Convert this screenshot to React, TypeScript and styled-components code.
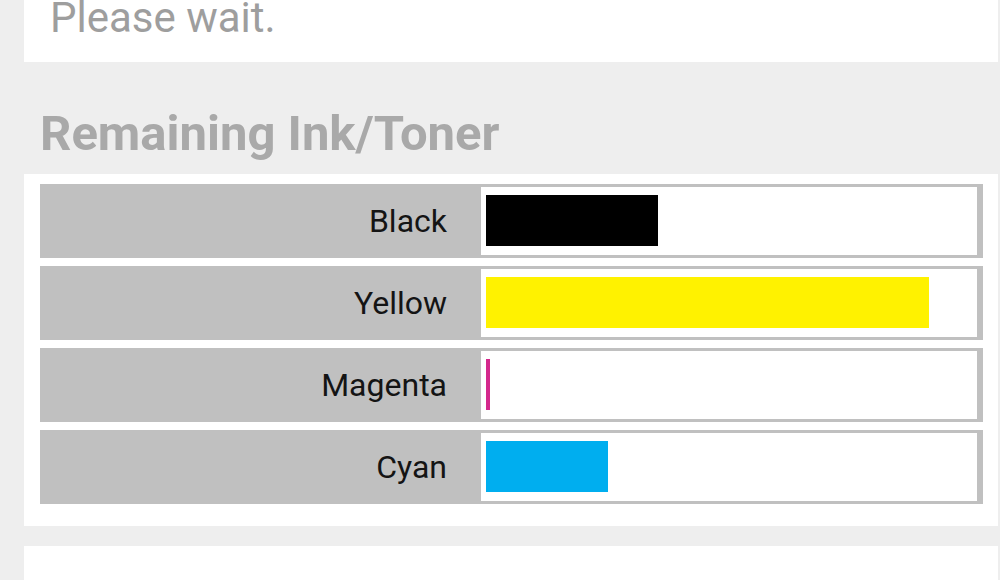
import React from 'react';
import styled, { createGlobalStyle } from 'styled-components';

const GlobalStyle = createGlobalStyle`
    html, body {
        margin: 0;
        padding: 0;
        background: #eeeeee;
        font-family: Roboto, 'Liberation Sans', sans-serif;
    }
`;

const Page = styled.div`
    width: 1000px;
    height: 580px;
    overflow: hidden;
    padding-left: 24px;
    box-sizing: border-box;
    background: #eeeeee;
`;

// верхняя карточка прокручена наполовину за край окна
const StatusCard = styled.div`
    height: 62px;
    overflow: hidden;
    background: #ffffff;
    padding-left: 26px;
    margin-right: 2px;
`;

const StatusText = styled.div`
    margin-top: -3px;
    font-size: 42px;
    line-height: 42px;
    color: #9e9e9e;
`;

const SectionTitle = styled.h2`
    margin: 47px 0 16px 16px;
    font-size: 49px;
    line-height: 49px;
    font-weight: 700;
    color: #a9a9a9;
`;

const InkCard = styled.div`
    background: #ffffff;
    padding: 10px 15px 22px 16px;
    margin-right: 2px;
    display: flex;
    flex-direction: column;
    gap: 8px;
`;

const InkRow = styled.div`
    display: grid;
    grid-template-columns: 438px 1fr;
    height: 74px;
    background: #c0c0c0;
`;

const InkLabel = styled.div`
    display: flex;
    align-items: center;
    justify-content: flex-end;
    padding-right: 31px;
    font-size: 32px;
    color: #141414;
`;

const Gauge = styled.div`
    padding: 3px 6px 3px 3px;
    display: flex;
`;

const GaugeBox = styled.div`
    flex: 1;
    background: #ffffff;
    padding: 8px 5px 9px 5px;
    display: flex;
`;

const GaugeBar = styled.div<{ $color: string }>`
    height: 100%;
    background: ${(p) => p.$color};
`;

const EmptyCard = styled.div`
    margin-top: 20px;
    margin-right: 2px;
    height: 40px;
    background: #ffffff;
`;

const inks = [
    { name: 'Black', color: '#000000', level: 35.4 },
    { name: 'Yellow', color: '#fff200', level: 91.2 },
    { name: 'Magenta', color: '#d4288c', level: 0.8 },
    { name: 'Cyan', color: '#00aeef', level: 25.1 },
];

const App: React.FC = () => {
    return (
        <>
            <GlobalStyle />
            <Page>
                <StatusCard>
                    <StatusText>Please wait.</StatusText>
                </StatusCard>
                <SectionTitle>Remaining Ink/Toner</SectionTitle>
                <InkCard>
                    {inks.map((ink) => (
                        <InkRow key={ink.name}>
                            <InkLabel>{ink.name}</InkLabel>
                            <Gauge>
                                <GaugeBox>
                                    <GaugeBar $color={ink.color} style={{ width: `${ink.level}%` }} />
                                </GaugeBox>
                            </Gauge>
                        </InkRow>
                    ))}
                </InkCard>
                <EmptyCard />
            </Page>
        </>
    );
};

export default App;
